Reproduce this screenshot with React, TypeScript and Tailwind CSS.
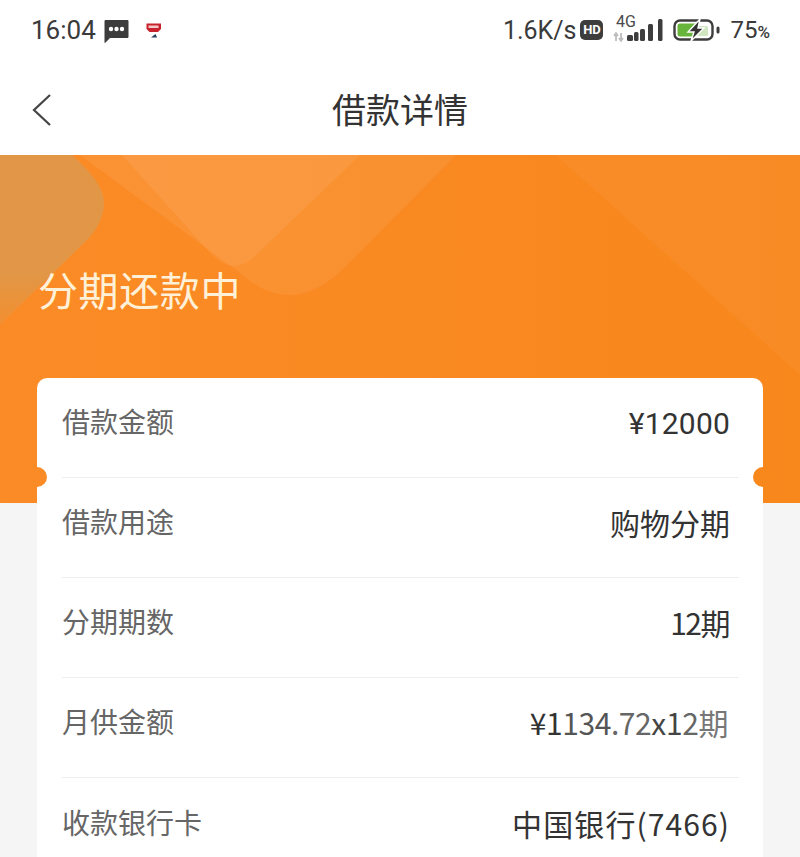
const font = { fontFamily: '"Noto Sans CJK SC", "Liberation Sans", sans-serif' };

const rows = [
  { label: "借款金额", value: <span className="font-['Roboto'] tracking-[0.2px]">¥12000</span> },
  { label: "借款用途", value: "购物分期" },
  { label: "分期期数", value: <span className="tracking-[-1.5px] pr-[1px]">12期</span> },
  {
    label: "月供金额",
    value: (
      <span className="tracking-[-0.4px] pr-[2px]">
        ¥1<span className="text-[#555]">134</span><span className="text-[#666]">.72</span><span className="text-[#444]">x1</span><span className="text-[#666]">2</span><span className="text-[#777]">期</span>
      </span>
    ),
  },
  { label: "收款银行卡", value: <span className="tracking-[1.1px]">中国银行(7466)</span> },
];

function Message() {
  return (
    <svg width="25" height="24" viewBox="0 0 25 24" className="mt-[1px]">
      <path d="M1 1.5 H24 V18.5 H6 L1 23.5 Z" fill="#3d3d3d" stroke="#3d3d3d" strokeLinejoin="round" />
      <circle cx="7" cy="10" r="2.2" fill="#fff" />
      <circle cx="12.5" cy="10" r="2.2" fill="#fff" />
      <circle cx="18" cy="10" r="2.2" fill="#fff" />
    </svg>
  );
}

function AppBadge() {
  return (
    <svg width="16" height="16" viewBox="0 0 16 16">
      <path d="M0.5 0.5 H15 V6 L12 9 H3.5 L0.5 6 Z" fill="#c8232c" />
      <rect x="2.5" y="2.5" width="10" height="2.5" fill="#f4c9c9" />
      <path d="M5 14.5 L9.5 11 L11 14.5 Z" fill="#27415f" />
    </svg>
  );
}

function Signal() {
  return (
    <svg width="50" height="36" viewBox="0 -3 50 36">
      <text x="3" y="12" fontSize="16" fill="#4a4a4a" fontFamily="Roboto, sans-serif">4G</text>
      <path d="M3 19 V26 M1 21 L3 18 L5 21 M8 18 V25 M6 23 L8 26 L10 23" stroke="#bdbdbd" strokeWidth="1.8" fill="none" />
      <rect x="14" y="20" width="6" height="6" rx="1.5" fill="#3d3d3d" />
      <rect x="21" y="17" width="4.5" height="9" rx="1.5" fill="#3d3d3d" />
      <rect x="27" y="14" width="5" height="12" rx="1.5" fill="#3d3d3d" />
      <rect x="35" y="9" width="5" height="17" rx="1.5" fill="#3d3d3d" />
      <rect x="45" y="4" width="4.5" height="22" rx="1.5" fill="#3d3d3d" />
    </svg>
  );
}

function Battery() {
  return (
    <svg width="47" height="24" viewBox="0 0 47 24">
      <rect x="1.5" y="2.5" width="38" height="19" rx="5.5" fill="none" stroke="#3d3d3d" strokeWidth="2.4" />
      <rect x="4.5" y="5.5" width="20" height="13" rx="2.5" fill="#68b53b" />
      <rect x="24" y="8" width="11" height="10" rx="1.5" fill="#cfe6c0" />
      <path d="M27 1 L15 14 H21 L18 23 L31 10 H25 Z" fill="#333" stroke="#fff" strokeWidth="1.4" />
      <rect x="43.5" y="8.5" width="3" height="7" rx="1.5" fill="#3d3d3d" />
    </svg>
  );
}

function HeaderArt() {
  return (
    <svg className="absolute inset-0" width="800" height="348" viewBox="0 0 800 348">
      <defs>
        <linearGradient id="blob" x1="0" y1="0" x2="0" y2="1">
          <stop offset="0" stopColor="#dc994c" stopOpacity="0.85" />
          <stop offset="0.7" stopColor="#dc994c" stopOpacity="0.85" />
          <stop offset="1" stopColor="#e89440" stopOpacity="0.45" />
        </linearGradient>
      </defs>
      <path d="M80 0 H456 L345 112 Q292 165 240 118 Z" fill="#ffffff" fillOpacity="0.07" />
      <path d="M122 0 H360 L256 100 Q234 122 212 100 Z" fill="#ffffff" fillOpacity="0.07" />
      <path d="M0 0 H72 Q104 28 104 48 Q104 66 88 84 L0 170 Z" fill="url(#blob)" />
      <path d="M556 0 H800 V220 Z" fill="#ffffff" fillOpacity="0.04" />
    </svg>
  );
}

export default function App() {
  return (
    <div className="relative w-[800px] h-[857px] overflow-hidden bg-[#f5f5f5]" style={font}>
      <div className="flex items-center justify-between h-[60px] pl-[31px] pr-[30px] bg-white text-[#3a3a3a]">
        <div className="flex items-center gap-[8px]">
          <span className="text-[26px] leading-none font-['Roboto']">16:04</span>
          <Message />
          <span className="ml-[9px] mt-[1px]"><AppBadge /></span>
        </div>
        <div className="flex items-center">
          <span className="text-[25px] leading-none font-['Roboto']">1.6K/s</span>
          <span className="ml-[4px] w-[23px] h-[20px] rounded-[5px] bg-[#3d3d3d] text-white text-[13px] leading-[20px] text-center font-bold font-['Roboto']">HD</span>
          <span className="ml-[10px]"><Signal /></span>
          <span className="ml-[10px]"><Battery /></span>
          <span className="ml-[10px] text-[24px] leading-none font-['Roboto']">75<span className="text-[17px] font-medium">%</span></span>
        </div>
      </div>

      <div className="relative flex items-center justify-center h-[95px] bg-white">
        <svg className="absolute left-[31px] top-[33px]" width="22" height="34" viewBox="0 0 22 34">
          <path d="M19 2 L3 17 L19 32" fill="none" stroke="#444" strokeWidth="2.2" />
        </svg>
        <h1 className="text-[34px] leading-none text-[#333] font-normal mt-[3px]">借款详情</h1>
      </div>

      <div className="relative h-[348px] bg-gradient-to-r from-[#fb8b26] to-[#f8871c] overflow-hidden">
        <HeaderArt />
        <p className="relative pl-[38px] pt-[109px] text-[40px] leading-[50px] tracking-[0.6px] text-[#fff0d8]">分期还款中</p>
      </div>

      <div className="relative -mt-[125px] mx-[37px] bg-white rounded-t-[10px]">
        {rows.map((row, i) => (
          <div key={row.label} className={`ml-[25px] mr-[24px] h-[100px] flex items-center justify-between pr-[9px] ${i < rows.length - 1 ? "border-b border-[#eeeeee]" : ""}`}>
            <span className="text-[28px] leading-none text-[#666] -mt-[13px]">{row.label}</span>
            <span className="text-[30px] leading-none text-[#333] -mt-[11px]">{row.value}</span>
          </div>
        ))}
        <span className="absolute -left-[10px] top-[89px] w-[20px] h-[20px] rounded-full bg-[#fb8b26]" />
        <span className="absolute -right-[10px] top-[89px] w-[20px] h-[20px] rounded-full bg-[#f8871c]" />
      </div>
    </div>
  );
}
